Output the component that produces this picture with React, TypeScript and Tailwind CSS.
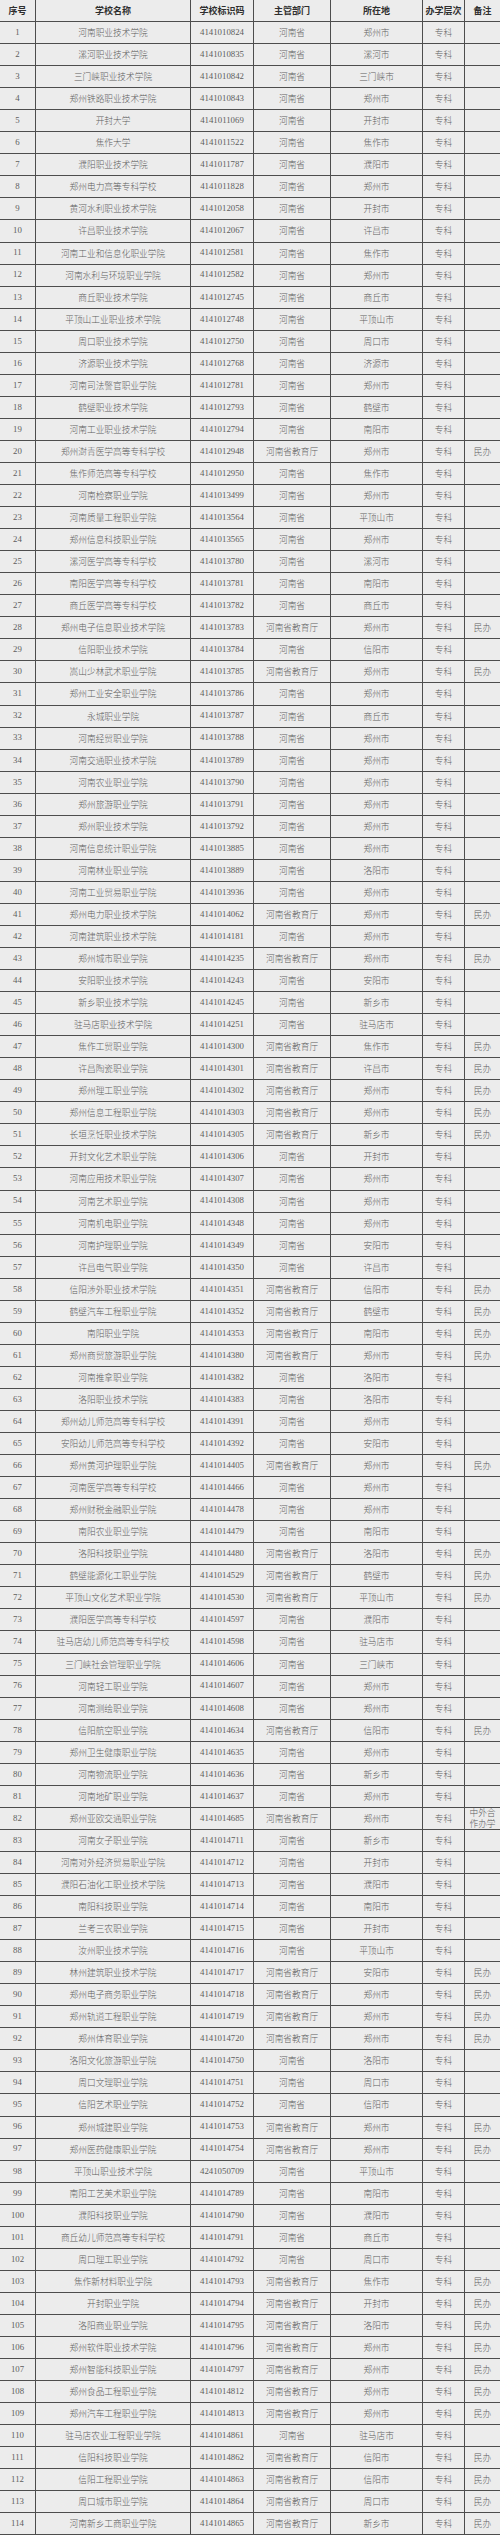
import React from "react";

type Row = [string, string, number, string];
// flag: 0 = 河南省, 1 = 河南省教育厅 + 民办, 2 = 河南省教育厅 + 中外合作办学
const rows: Row[] = [
  ["河南职业技术学院", "4141010824", 0, "郑州市"],
  ["漯河职业技术学院", "4141010835", 0, "漯河市"],
  ["三门峡职业技术学院", "4141010842", 0, "三门峡市"],
  ["郑州铁路职业技术学院", "4141010843", 0, "郑州市"],
  ["开封大学", "4141011069", 0, "开封市"],
  ["焦作大学", "4141011522", 0, "焦作市"],
  ["濮阳职业技术学院", "4141011787", 0, "濮阳市"],
  ["郑州电力高等专科学校", "4141011828", 0, "郑州市"],
  ["黄河水利职业技术学院", "4141012058", 0, "开封市"],
  ["许昌职业技术学院", "4141012067", 0, "许昌市"],
  ["河南工业和信息化职业学院", "4141012581", 0, "焦作市"],
  ["河南水利与环境职业学院", "4141012582", 0, "郑州市"],
  ["商丘职业技术学院", "4141012745", 0, "商丘市"],
  ["平顶山工业职业技术学院", "4141012748", 0, "平顶山市"],
  ["周口职业技术学院", "4141012750", 0, "周口市"],
  ["济源职业技术学院", "4141012768", 0, "济源市"],
  ["河南司法警官职业学院", "4141012781", 0, "郑州市"],
  ["鹤壁职业技术学院", "4141012793", 0, "鹤壁市"],
  ["河南工业职业技术学院", "4141012794", 0, "南阳市"],
  ["郑州澍青医学高等专科学校", "4141012948", 1, "郑州市"],
  ["焦作师范高等专科学校", "4141012950", 0, "焦作市"],
  ["河南检察职业学院", "4141013499", 0, "郑州市"],
  ["河南质量工程职业学院", "4141013564", 0, "平顶山市"],
  ["郑州信息科技职业学院", "4141013565", 0, "郑州市"],
  ["漯河医学高等专科学校", "4141013780", 0, "漯河市"],
  ["南阳医学高等专科学校", "4141013781", 0, "南阳市"],
  ["商丘医学高等专科学校", "4141013782", 0, "商丘市"],
  ["郑州电子信息职业技术学院", "4141013783", 1, "郑州市"],
  ["信阳职业技术学院", "4141013784", 0, "信阳市"],
  ["嵩山少林武术职业学院", "4141013785", 1, "郑州市"],
  ["郑州工业安全职业学院", "4141013786", 0, "郑州市"],
  ["永城职业学院", "4141013787", 0, "商丘市"],
  ["河南经贸职业学院", "4141013788", 0, "郑州市"],
  ["河南交通职业技术学院", "4141013789", 0, "郑州市"],
  ["河南农业职业学院", "4141013790", 0, "郑州市"],
  ["郑州旅游职业学院", "4141013791", 0, "郑州市"],
  ["郑州职业技术学院", "4141013792", 0, "郑州市"],
  ["河南信息统计职业学院", "4141013885", 0, "郑州市"],
  ["河南林业职业学院", "4141013889", 0, "洛阳市"],
  ["河南工业贸易职业学院", "4141013936", 0, "郑州市"],
  ["郑州电力职业技术学院", "4141014062", 1, "郑州市"],
  ["河南建筑职业技术学院", "4141014181", 0, "郑州市"],
  ["郑州城市职业学院", "4141014235", 1, "郑州市"],
  ["安阳职业技术学院", "4141014243", 0, "安阳市"],
  ["新乡职业技术学院", "4141014245", 0, "新乡市"],
  ["驻马店职业技术学院", "4141014251", 0, "驻马店市"],
  ["焦作工贸职业学院", "4141014300", 1, "焦作市"],
  ["许昌陶瓷职业学院", "4141014301", 1, "许昌市"],
  ["郑州理工职业学院", "4141014302", 1, "郑州市"],
  ["郑州信息工程职业学院", "4141014303", 1, "郑州市"],
  ["长垣烹饪职业技术学院", "4141014305", 1, "新乡市"],
  ["开封文化艺术职业学院", "4141014306", 0, "开封市"],
  ["河南应用技术职业学院", "4141014307", 0, "郑州市"],
  ["河南艺术职业学院", "4141014308", 0, "郑州市"],
  ["河南机电职业学院", "4141014348", 0, "郑州市"],
  ["河南护理职业学院", "4141014349", 0, "安阳市"],
  ["许昌电气职业学院", "4141014350", 0, "许昌市"],
  ["信阳涉外职业技术学院", "4141014351", 1, "信阳市"],
  ["鹤壁汽车工程职业学院", "4141014352", 1, "鹤壁市"],
  ["南阳职业学院", "4141014353", 1, "南阳市"],
  ["郑州商贸旅游职业学院", "4141014380", 1, "郑州市"],
  ["河南推拿职业学院", "4141014382", 0, "洛阳市"],
  ["洛阳职业技术学院", "4141014383", 0, "洛阳市"],
  ["郑州幼儿师范高等专科学校", "4141014391", 0, "郑州市"],
  ["安阳幼儿师范高等专科学校", "4141014392", 0, "安阳市"],
  ["郑州黄河护理职业学院", "4141014405", 1, "郑州市"],
  ["河南医学高等专科学校", "4141014466", 0, "郑州市"],
  ["郑州财税金融职业学院", "4141014478", 0, "郑州市"],
  ["南阳农业职业学院", "4141014479", 0, "南阳市"],
  ["洛阳科技职业学院", "4141014480", 1, "洛阳市"],
  ["鹤壁能源化工职业学院", "4141014529", 1, "鹤壁市"],
  ["平顶山文化艺术职业学院", "4141014530", 1, "平顶山市"],
  ["濮阳医学高等专科学校", "4141014597", 0, "濮阳市"],
  ["驻马店幼儿师范高等专科学校", "4141014598", 0, "驻马店市"],
  ["三门峡社会管理职业学院", "4141014606", 0, "三门峡市"],
  ["河南轻工职业学院", "4141014607", 0, "郑州市"],
  ["河南测绘职业学院", "4141014608", 0, "郑州市"],
  ["信阳航空职业学院", "4141014634", 1, "信阳市"],
  ["郑州卫生健康职业学院", "4141014635", 0, "郑州市"],
  ["河南物流职业学院", "4141014636", 0, "新乡市"],
  ["河南地矿职业学院", "4141014637", 0, "郑州市"],
  ["郑州亚欧交通职业学院", "4141014685", 2, "郑州市"],
  ["河南女子职业学院", "4141014711", 0, "新乡市"],
  ["河南对外经济贸易职业学院", "4141014712", 0, "开封市"],
  ["濮阳石油化工职业技术学院", "4141014713", 0, "濮阳市"],
  ["南阳科技职业学院", "4141014714", 0, "南阳市"],
  ["兰考三农职业学院", "4141014715", 0, "开封市"],
  ["汝州职业技术学院", "4141014716", 0, "平顶山市"],
  ["林州建筑职业技术学院", "4141014717", 1, "安阳市"],
  ["郑州电子商务职业学院", "4141014718", 1, "郑州市"],
  ["郑州轨道工程职业学院", "4141014719", 1, "郑州市"],
  ["郑州体育职业学院", "4141014720", 1, "郑州市"],
  ["洛阳文化旅游职业学院", "4141014750", 0, "洛阳市"],
  ["周口文理职业学院", "4141014751", 0, "周口市"],
  ["信阳艺术职业学院", "4141014752", 0, "信阳市"],
  ["郑州城建职业学院", "4141014753", 1, "郑州市"],
  ["郑州医药健康职业学院", "4141014754", 1, "郑州市"],
  ["平顶山职业技术学院", "4241050709", 0, "平顶山市"],
  ["南阳工艺美术职业学院", "4141014789", 0, "南阳市"],
  ["濮阳科技职业学院", "4141014790", 0, "濮阳市"],
  ["商丘幼儿师范高等专科学校", "4141014791", 0, "商丘市"],
  ["周口理工职业学院", "4141014792", 0, "周口市"],
  ["焦作新材料职业学院", "4141014793", 1, "焦作市"],
  ["开封职业学院", "4141014794", 1, "开封市"],
  ["洛阳商业职业学院", "4141014795", 1, "洛阳市"],
  ["郑州软件职业技术学院", "4141014796", 1, "郑州市"],
  ["郑州智能科技职业学院", "4141014797", 1, "郑州市"],
  ["郑州食品工程职业学院", "4141014812", 1, "郑州市"],
  ["郑州汽车工程职业学院", "4141014813", 1, "郑州市"],
  ["驻马店农业工程职业学院", "4141014861", 0, "驻马店市"],
  ["信阳科技职业学院", "4141014862", 1, "信阳市"],
  ["信阳工程职业学院", "4141014863", 1, "信阳市"],
  ["周口城市职业学院", "4141014864", 1, "周口市"],
  ["河南新乡工商职业学院", "4141014865", 1, "新乡市"],
];

const grid =
  "grid grid-cols-[36px_155px_63px_77px_92px_42px_35px] h-[22.05px] border-b border-[#4d4d4d]";
const cell =
  "flex items-center justify-center text-center border-r border-[#4d4d4d] overflow-hidden";
const cellLast = "flex items-center justify-center text-center overflow-hidden";
const cjk = "font-['Noto_Sans_CJK_SC',sans-serif] font-light";
const serif = "font-['Liberation_Serif','Noto_Sans_CJK_SC',serif]";

export default function App() {
  return (
    <div className="w-[500px] bg-[#ececec] text-[#5e5e5e]">
      <div className={`${grid} text-[#2f2f2f] text-[9px] font-bold ${"font-['Noto_Sans_CJK_SC',sans-serif]"}`}>
        <div className={cell}>序号</div>
        <div className={cell}>学校名称</div>
        <div className={cell}>学校标识码</div>
        <div className={cell}>主管部门</div>
        <div className={cell}>所在地</div>
        <div className={cell}>办学层次</div>
        <div className={cellLast}>备注</div>
      </div>
      {rows.map(([name, code, flag, city], i) => (
        <div key={i} className={grid}>
          <div className={`${cell} ${serif} text-[8.8px]`}>{i + 1}</div>
          <div className={`${cell} ${cjk} text-[8.7px] whitespace-nowrap`}>{name}</div>
          <div className={`${cell} ${serif} text-[8.8px]`}>{code}</div>
          <div className={`${cell} ${cjk} text-[8.7px]`}>
            {flag ? "河南省教育厅" : "河南省"}
          </div>
          <div className={`${cell} ${cjk} text-[8.7px]`}>{city}</div>
          <div className={`${cell} ${cjk} text-[8.7px]`}>专科</div>
          <div className={`${cellLast} ${cjk} text-[8.7px] leading-[11px] px-[2px]`}>
            {flag === 1 ? "民办" : flag === 2 ? "中外合作办学" : ""}
          </div>
        </div>
      ))}
    </div>
  );
}
